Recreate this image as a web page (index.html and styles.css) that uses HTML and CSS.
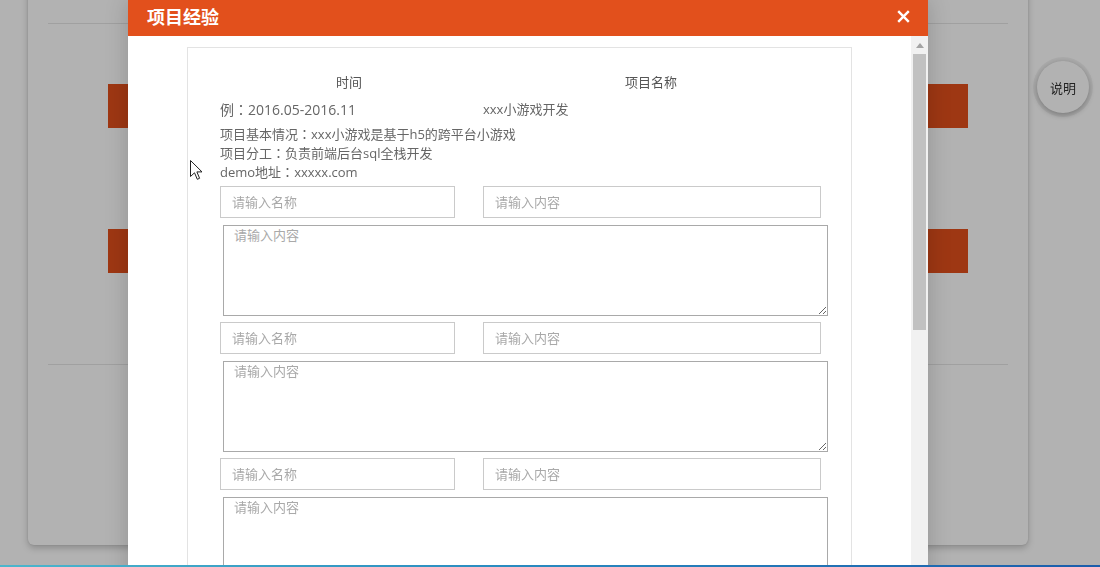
FILE: index.html
```html
<!DOCTYPE html>
<html lang="zh-CN">
<head>
<meta charset="utf-8">
<title>项目经验</title>
<link rel="stylesheet" href="styles.css">
</head>
<body>
<div class="page">
  <div class="card">
    <div class="card-top"></div>
    <div class="card-section">
      <div class="bar"></div>
      <div class="bar bar-second"></div>
    </div>
  </div>
</div>
<button class="help">说明</button>
<div class="mask"></div>
<div class="modal">
  <div class="modal-head">
    <h2 class="modal-title">项目经验</h2>
    <svg class="close" width="13" height="13" viewBox="0 0 13 13"><path d="M1.2 1.2 L11.8 11.8 M11.8 1.2 L1.2 11.8" stroke="#fff" stroke-width="2.4" fill="none"/></svg>
  </div>
  <div class="modal-body">
    <div class="modal-scroll">
      <div class="box">
        <div class="head-cols"><span>时间</span><span>项目名称</span></div>
        <div class="example"><span class="ex-date">例<span class="colon" lang="zh-TW">：</span>2016.05-2016.11</span><span>xxx小游戏开发</span></div>
        <p class="info">项目基本情况<span class="colon" lang="zh-TW">：</span>xxx小游戏是基于h5的跨平台小游戏</p>
        <p class="info">项目分工<span class="colon" lang="zh-TW">：</span>负责前端后台sql全栈开发</p>
        <p class="info">demo地址<span class="colon" lang="zh-TW">：</span>xxxxx.com</p>
        <div class="entries">
          <div class="entry">
            <div class="entry-row">
              <input class="in-name" type="text" placeholder="请输入名称">
              <input class="in-content" type="text" placeholder="请输入内容">
            </div>
            <textarea placeholder="请输入内容"></textarea>
          </div>
          <div class="entry">
            <div class="entry-row">
              <input class="in-name" type="text" placeholder="请输入名称">
              <input class="in-content" type="text" placeholder="请输入内容">
            </div>
            <textarea placeholder="请输入内容"></textarea>
          </div>
          <div class="entry">
            <div class="entry-row">
              <input class="in-name" type="text" placeholder="请输入名称">
              <input class="in-content" type="text" placeholder="请输入内容">
            </div>
            <textarea placeholder="请输入内容"></textarea>
          </div>
        </div>
      </div>
    </div>
    <div class="scrollbar"><span class="sb-arrow"></span><span class="sb-thumb"></span></div>
  </div>
</div>
<svg class="cursor" width="14" height="21" viewBox="0 0 14 21"><path d="M0.5 0.5 L0.5 16.5 L4.5 12.8 L7.3 19.3 L9.6 18.3 L6.9 11.9 L12 11.9 Z" fill="#fff" stroke="#222" stroke-width="1" stroke-linejoin="miter"/></svg>
<div class="taskline"></div>
</body>
</html>
```

FILE: styles.css
```css
html, body {
  margin: 0;
  padding: 0;
  width: 1100px;
  height: 567px;
  overflow: hidden;
  background: #fff;
  font-family: "Open Sans", "Noto Sans CJK SC", sans-serif;
}

.page {
  padding-left: 28px;
}

.card {
  width: 1000px;
  height: 565px;
  margin-top: -20px;
  box-sizing: border-box;
  padding: 0 20px;
  background: #fff;
  border-radius: 6px;
  box-shadow: 0 3px 7px rgba(0, 0, 0, 0.22), 0 0 2px rgba(0, 0, 0, 0.12);
}

.card-top {
  height: 43px;
  border-bottom: 1px solid #e5e5e5;
}

.card-section {
  padding: 60px 40px 91px 60px;
  border-bottom: 1px solid #e5e5e5;
}

.bar {
  height: 44px;
  background: #e2501c;
}

.bar-second {
  margin-top: 101px;
}

.help {
  position: fixed;
  left: 1037px;
  top: 61px;
  width: 52px;
  height: 52px;
  border: none;
  border-radius: 50%;
  background: #fff;
  box-shadow: 0 2px 6px rgba(0, 0, 0, 0.3), 0 0 0 4px rgba(0, 0, 0, 0.05);
  color: #333;
  font-family: "Noto Sans CJK SC", sans-serif;
  font-size: 13px;
  padding: 0;
}

.mask {
  position: fixed;
  inset: 0;
  background: rgba(0, 0, 0, 0.3);
}

.modal {
  position: fixed;
  left: 128px;
  top: 0;
  width: 800px;
  height: 640px;
  background: #fff;
  box-shadow: 0 0 22px rgba(0, 0, 0, 0.18);
  display: flex;
  flex-direction: column;
}

.modal-head {
  height: 36px;
  flex: none;
  background: #e2501c;
  display: flex;
  align-items: center;
  justify-content: space-between;
  padding: 0 18px 4px 19px;
  box-sizing: border-box;
}

.modal-title {
  margin: 0;
  color: #fff;
  font-family: "Noto Sans CJK SC", sans-serif;
  font-size: 18px;
  font-weight: 700;
  line-height: 24px;
}

.close {
  display: block;
}

.modal-body {
  flex: 1;
  display: flex;
  overflow: hidden;
}

.modal-scroll {
  flex: 1;
  padding: 11px 59px 0;
  overflow: hidden;
}

.box {
  border: 1px solid #e3e3e3;
  padding: 25px 0 0 32px;
  height: 700px;
  color: #666;
  font-size: 13px;
}

.colon {
  font-family: "Noto Sans CJK TC", sans-serif;
  line-height: 0;
}

.head-cols {
  display: grid;
  grid-template-columns: 258px 346px;
  text-align: center;
  line-height: 19px;
  color: #555;
}

.example {
  margin-top: 8px;
  display: grid;
  grid-template-columns: 263px auto;
  line-height: 19px;
}

.ex-date {
  font-size: 14px;
}

.info {
  margin: 0;
  line-height: 19px;
}

.example + .info {
  margin-top: 6px;
}

.entries {
  margin-top: 4px;
}

.entry-row {
  display: flex;
  gap: 28px;
}

input,
textarea {
  font-family: "Noto Sans CJK SC", sans-serif;
  font-size: 13px;
  color: #555;
  box-sizing: border-box;
  outline: none;
  background: #fff;
}

input {
  height: 32px;
  border: 1px solid #cacaca;
  padding: 0 11px 2px;
  margin: 0;
}

.in-name {
  width: 235px;
}

.in-content {
  width: 338px;
}

textarea {
  display: block;
  width: 605px;
  height: 91px;
  margin: 7px 0 6px 3px;
  padding: 0 10px;
  line-height: 17px;
  border: 1px solid #a9a9a9;
  border-radius: 0;
}

::placeholder {
  color: #a9a9a9;
}

.scrollbar {
  width: 17px;
  flex: none;
  background: #f1f1f1;
  display: flex;
  flex-direction: column;
  align-items: center;
}

.sb-arrow {
  margin-top: 7px;
  width: 0;
  height: 0;
  border-left: 4px solid transparent;
  border-right: 4px solid transparent;
  border-bottom: 5px solid #a3a3a3;
}

.sb-thumb {
  margin-top: 6px;
  width: 13px;
  height: 276px;
  background: #c1c1c1;
}

.cursor {
  position: fixed;
  left: 190px;
  top: 160px;
}

.taskline {
  position: fixed;
  left: 0;
  right: 0;
  bottom: 0;
  height: 2px;
  background: linear-gradient(to right, #4cb6cc, #2a8cc0 45%, #1b5dab);
}
```
